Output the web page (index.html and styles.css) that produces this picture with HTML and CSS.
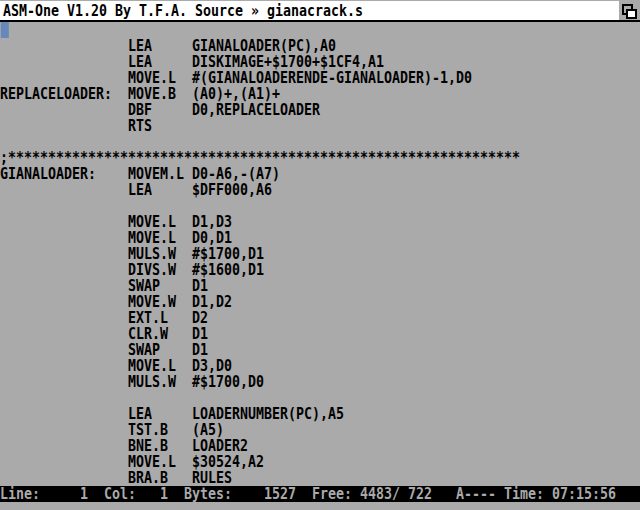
FILE: index.html
```html
<!DOCTYPE html>
<html>
<head>
<meta charset="utf-8">
<link rel="stylesheet" href="styles.css">
</head>
<body>
<div class="screen">
  <div class="titlebar">
    <div class="title"><pre class="txt">ASM-One V1.20 By T.F.A. Source » gianacrack.s</pre></div>
    <div class="depth">
      <svg width="21" height="19" viewBox="0 0 21 19">
        <rect x="4" y="4" width="9" height="9" fill="#aaa" stroke="#000" stroke-width="2"/>
        <rect x="8" y="9" width="9" height="8" fill="#fff" stroke="#000" stroke-width="2"/>
      </svg>
    </div>
  </div>
  <div class="editor">
<pre class="txt"><span class="cursor"> </span>
                LEA     GIANALOADER(PC),A0
                LEA     DISKIMAGE+$1700+$1CF4,A1
                MOVE.L  #(GIANALOADERENDE-GIANALOADER)-1,D0
REPLACELOADER:  MOVE.B  (A0)+,(A1)+
                DBF     D0,REPLACELOADER
                RTS

;****************************************************************
GIANALOADER:    MOVEM.L D0-A6,-(A7)
                LEA     $DFF000,A6

                MOVE.L  D1,D3
                MOVE.L  D0,D1
                MULS.W  #$1700,D1
                DIVS.W  #$1600,D1
                SWAP    D1
                MOVE.W  D1,D2
                EXT.L   D2
                CLR.W   D1
                SWAP    D1
                MOVE.L  D3,D0
                MULS.W  #$1700,D0

                LEA     LOADERNUMBER(PC),A5
                TST.B   (A5)
                BNE.B   LOADER2
                MOVE.L  $30524,A2
                BRA.B   RULES</pre>
  </div>
  <div class="status"><pre class="txt">Line:     1  Col:   1  Bytes:    1527  Free: 4483/ 722   A---- Time: 07:15:56</pre></div>
</div>
</body>
</html>
```

FILE: styles.css
```css
html, body {
  margin: 0;
  padding: 0;
  width: 640px;
  height: 510px;
  overflow: hidden;
  background: #aaaaaa;
}

.screen {
  width: 640px;
  height: 510px;
  background: #aaaaaa;
  display: flex;
  flex-direction: column;
}

.txt {
  margin: 0;
  font-family: "DejaVu Sans Mono", monospace;
  font-weight: bold;
  font-size: 16.61px;
  line-height: 16px;
  white-space: pre;
  transform: scaleX(0.8);
  transform-origin: 0 0;
}

.titlebar {
  margin-top: 1px;
  height: 19px;
  border-bottom: 2px solid #000;
  background: #ffffff;
  display: flex;
}

.title {
  flex: 1;
  padding: 2px 0 0 3px;
  color: #000;
}

.depth {
  width: 21px;
  height: 19px;
  background: #aaaaaa;
}

.depth svg {
  display: block;
}

.editor {
  height: 464px;
  color: #000;
}

.cursor {
  display: inline-block;
  width: 10px;
  height: 16px;
  margin-left: 1.25px;
  vertical-align: top;
  background: #6688bb;
}

.status {
  height: 16px;
  background: #000;
  color: #aaaaaa;
}
```
